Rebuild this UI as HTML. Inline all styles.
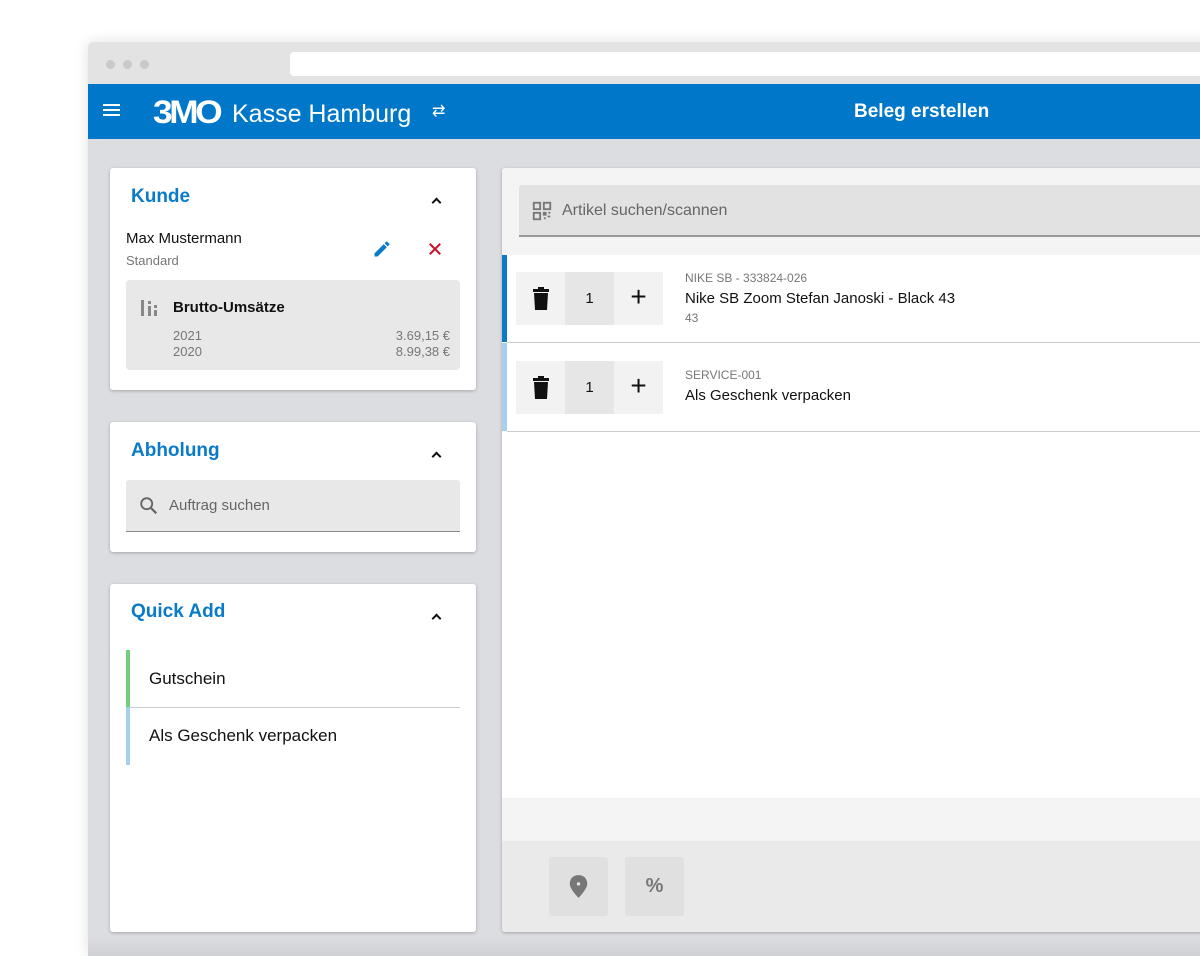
<!DOCTYPE html>
<html><head><meta charset="utf-8"><style>
*{box-sizing:border-box;margin:0;padding:0}
body{width:1200px;height:956px;background:#fff;font-family:"Liberation Sans",Arial,sans-serif;position:relative;overflow:hidden;color:#111}
.win{position:absolute;left:88px;top:42px;width:1140px;height:914px;background:#dcdde0;border-radius:6px 0 0 0;box-shadow:0 0 14px rgba(0,0,0,.12);overflow:hidden}
.tb{position:absolute;left:0;top:0;right:0;height:42px;background:#e3e3e3}
.dot{position:absolute;top:18px;width:9px;height:9px;border-radius:50%;background:#c9c9c9}
.url{position:absolute;left:202px;top:10px;right:0;height:24px;background:#fff;border-radius:4px}
.hdr{position:absolute;left:0;top:42px;right:0;height:55px;background:#0077c8;color:#fff}
.card{position:absolute;background:#fff;border-radius:3px;box-shadow:0 1px 3px rgba(0,0,0,.25)}
.ttl{position:absolute;left:21px;font-size:19px;font-weight:bold;color:#0a7bc9}
.chev{position:absolute;right:36px;width:7px;height:7px;border-left:2px solid #111;border-top:2px solid #111;transform:rotate(45deg)}
.a{position:absolute}
</style></head><body>
<div class="win">
 <div class="tb"><div class="dot" style="left:18px"></div><div class="dot" style="left:35px"></div><div class="dot" style="left:52px"></div><div class="url"></div></div>
 <div class="hdr">
  <div class="a" style="left:15px;top:20px;width:17px;height:2px;background:#fff;box-shadow:0 5px 0 #fff,0 10px 0 #fff"></div>
  <div class="a" style="left:65px;top:10px;font-size:32px;font-weight:bold;letter-spacing:-3px;transform:scaleX(1.1);transform-origin:left">3MO</div>
  <div class="a" style="left:144px;top:16px;font-size:25px">Kasse Hamburg</div>
  <div class="a" style="left:344px;top:17px;font-size:16px">⇄</div>
  <div class="a" style="left:766px;top:17px;font-size:19px;font-weight:bold">Beleg erstellen</div>
 </div>
 <div class="a" style="left:0;right:0;bottom:0;height:18px;background:linear-gradient(#dcdde0,#cfd0d4)"></div>
</div>

<div class="card" style="left:110px;top:168px;width:366px;height:222px">
 <div class="ttl" style="top:18px">Kunde</div><div class="chev" style="top:31px"></div>
 <div class="a" style="left:16px;top:62px;font-size:15px">Max Mustermann</div>
 <div class="a" style="left:16px;top:85px;font-size:13px;color:#777">Standard</div>
 <svg class="a" style="left:262px;top:71px" width="20" height="20" viewBox="0 0 24 24"><path fill="#0a7bc9" d="M3 17.25V21h3.75L17.8 9.94l-3.75-3.75L3 17.25zM20.7 7.04a1 1 0 000-1.41l-2.34-2.34a1 1 0 00-1.41 0l-1.83 1.83 3.75 3.75 1.83-1.83z"/></svg>
 <svg class="a" style="left:316px;top:72px" width="18" height="18" viewBox="0 0 24 24"><path stroke="#c8102e" stroke-width="2.6" d="M5 5L19 19M19 5L5 19"/></svg>
 <div class="a" style="left:16px;top:112px;width:334px;height:90px;background:#e8e8e8;border-radius:4px">
  <svg class="a" style="left:15px;top:18px" width="18" height="20" viewBox="0 0 18 20"><rect x="0" y="2" width="3" height="16" fill="#888"/><rect x="7" y="8" width="3" height="10" fill="#888"/><rect x="13" y="12" width="3" height="6" fill="#888"/><rect x="7" y="3" width="3" height="3" fill="#888"/><rect x="13" y="7" width="3" height="3" fill="#888"/></svg>
  <div class="a" style="left:47px;top:19px;font-size:15px;font-weight:bold">Brutto-Umsätze</div>
  <div class="a" style="left:47px;top:48px;font-size:13px;color:#777;line-height:16px">2021<br>2020</div>
  <div class="a" style="right:10px;top:48px;font-size:13px;color:#777;line-height:16px;text-align:right">3.69,15 €<br>8.99,38 €</div>
 </div>
</div>

<div class="card" style="left:110px;top:422px;width:366px;height:130px">
 <div class="ttl" style="top:18px">Abholung</div><div class="chev" style="top:31px"></div>
 <div class="a" style="left:16px;top:58px;width:334px;height:52px;background:#e8e8e8;border-bottom:1px solid #888;border-radius:3px 3px 0 0">
  <svg class="a" style="left:12px;top:15px" width="22" height="22" viewBox="0 0 24 24"><circle cx="9.5" cy="9.5" r="6" fill="none" stroke="#666" stroke-width="2"/><path d="M14 14l6 6" stroke="#666" stroke-width="2.4"/></svg>
  <div class="a" style="left:43px;top:17px;font-size:15px;color:#666">Auftrag suchen</div>
 </div>
</div>

<div class="card" style="left:110px;top:584px;width:366px;height:348px">
 <div class="ttl" style="top:17px">Quick Add</div><div class="chev" style="top:31px"></div>
 <div class="a" style="left:16px;top:66px;width:4px;height:57px;background:#6fcf7a"></div>
 <div class="a" style="left:16px;top:123px;width:4px;height:58px;background:#a6d0ee"></div>
 <div class="a" style="left:20px;top:123px;width:330px;height:1px;background:#ccc"></div>
 <div class="a" style="left:39px;top:85px;font-size:17px">Gutschein</div>
 <div class="a" style="left:39px;top:142px;font-size:17px">Als Geschenk verpacken</div>
</div>

<div class="card" style="left:502px;top:168px;width:720px;height:764px;background:#f4f4f4;overflow:hidden">
 <div class="a" style="left:17px;top:17px;right:0;height:52px;background:#e2e2e2;border-bottom:2px solid #999;border-radius:3px 0 0 0">
  <svg class="a" style="left:12px;top:15px" width="22" height="22" viewBox="0 0 24 24" fill="none" stroke="#777" stroke-width="2"><rect x="3" y="3" width="7" height="7"/><rect x="14" y="3" width="7" height="7"/><rect x="3" y="14" width="7" height="7"/><path d="M14 14h2v2h-2zM18 18h3M14 20h2M19 14h2" stroke-width="2"/></svg>
  <div class="a" style="left:43px;top:17px;font-size:16px;color:#666">Artikel suchen/scannen</div>
 </div>
 <div class="a" style="left:0;top:87px;right:0;height:543px;background:#fff"></div>
 <div class="a" style="left:0;top:87px;width:5px;height:87px;background:#0a7bc9"></div>
 <div class="a" style="left:0;top:175px;width:5px;height:88px;background:#a6d0ee"></div>
 <div class="a" style="left:5px;top:174px;right:0;height:1px;background:#ccc"></div>
 <div class="a" style="left:5px;top:263px;right:0;height:1px;background:#ccc"></div>
 <div class="a" style="left:14px;top:104px;width:49px;height:53px;background:#f2f2f2"></div>
 <div class="a" style="left:63px;top:104px;width:49px;height:53px;background:#e6e6e6;font-size:15px;text-align:center;line-height:53px">1</div>
 <div class="a" style="left:112px;top:104px;width:49px;height:53px;background:#f2f2f2;font-size:28px;text-align:center;line-height:50px">+</div>
 <svg class="a" style="left:30px;top:119px" width="18" height="24" viewBox="0 0 18 24"><rect x="1" y="2" width="16" height="3" fill="#111"/><rect x="6" y="0" width="6" height="3" fill="#111"/><path d="M2 6h14l-1 17H3z" fill="#111"/></svg>
 <div class="a" style="left:183px;top:103px;font-size:12px;color:#777">NIKE SB - 333824-026</div>
 <div class="a" style="left:183px;top:122px;font-size:15px">Nike SB Zoom Stefan Janoski - Black 43</div>
 <div class="a" style="left:183px;top:143px;font-size:12px;color:#777">43</div>
 <div class="a" style="left:14px;top:193px;width:49px;height:53px;background:#f2f2f2"></div>
 <div class="a" style="left:63px;top:193px;width:49px;height:53px;background:#e6e6e6;font-size:15px;text-align:center;line-height:53px">1</div>
 <div class="a" style="left:112px;top:193px;width:49px;height:53px;background:#f2f2f2;font-size:28px;text-align:center;line-height:50px">+</div>
 <svg class="a" style="left:30px;top:208px" width="18" height="24" viewBox="0 0 18 24"><rect x="1" y="2" width="16" height="3" fill="#111"/><rect x="6" y="0" width="6" height="3" fill="#111"/><path d="M2 6h14l-1 17H3z" fill="#111"/></svg>
 <div class="a" style="left:183px;top:200px;font-size:12px;color:#777">SERVICE-001</div>
 <div class="a" style="left:183px;top:219px;font-size:15px">Als Geschenk verpacken</div>
 <div class="a" style="left:0;top:673px;right:0;height:91px;background:#eaeaea"></div>
 <div class="a" style="left:47px;top:689px;width:59px;height:59px;background:#e0e0e0;border-radius:3px">
  <svg class="a" style="left:19px;top:17px" width="21" height="25" viewBox="0 0 24 28"><path d="M12 1C6 1 2 5 2 11c0 6 10 16 10 16s10-10 10-16C22 5 18 1 12 1z" fill="#777"/><circle cx="12" cy="11" r="2" fill="#e0e0e0"/></svg>
 </div>
 <div class="a" style="left:123px;top:689px;width:59px;height:59px;background:#e0e0e0;border-radius:3px;font-size:20px;font-weight:bold;color:#777;text-align:center;line-height:59px">%</div>
</div>
</body></html>
